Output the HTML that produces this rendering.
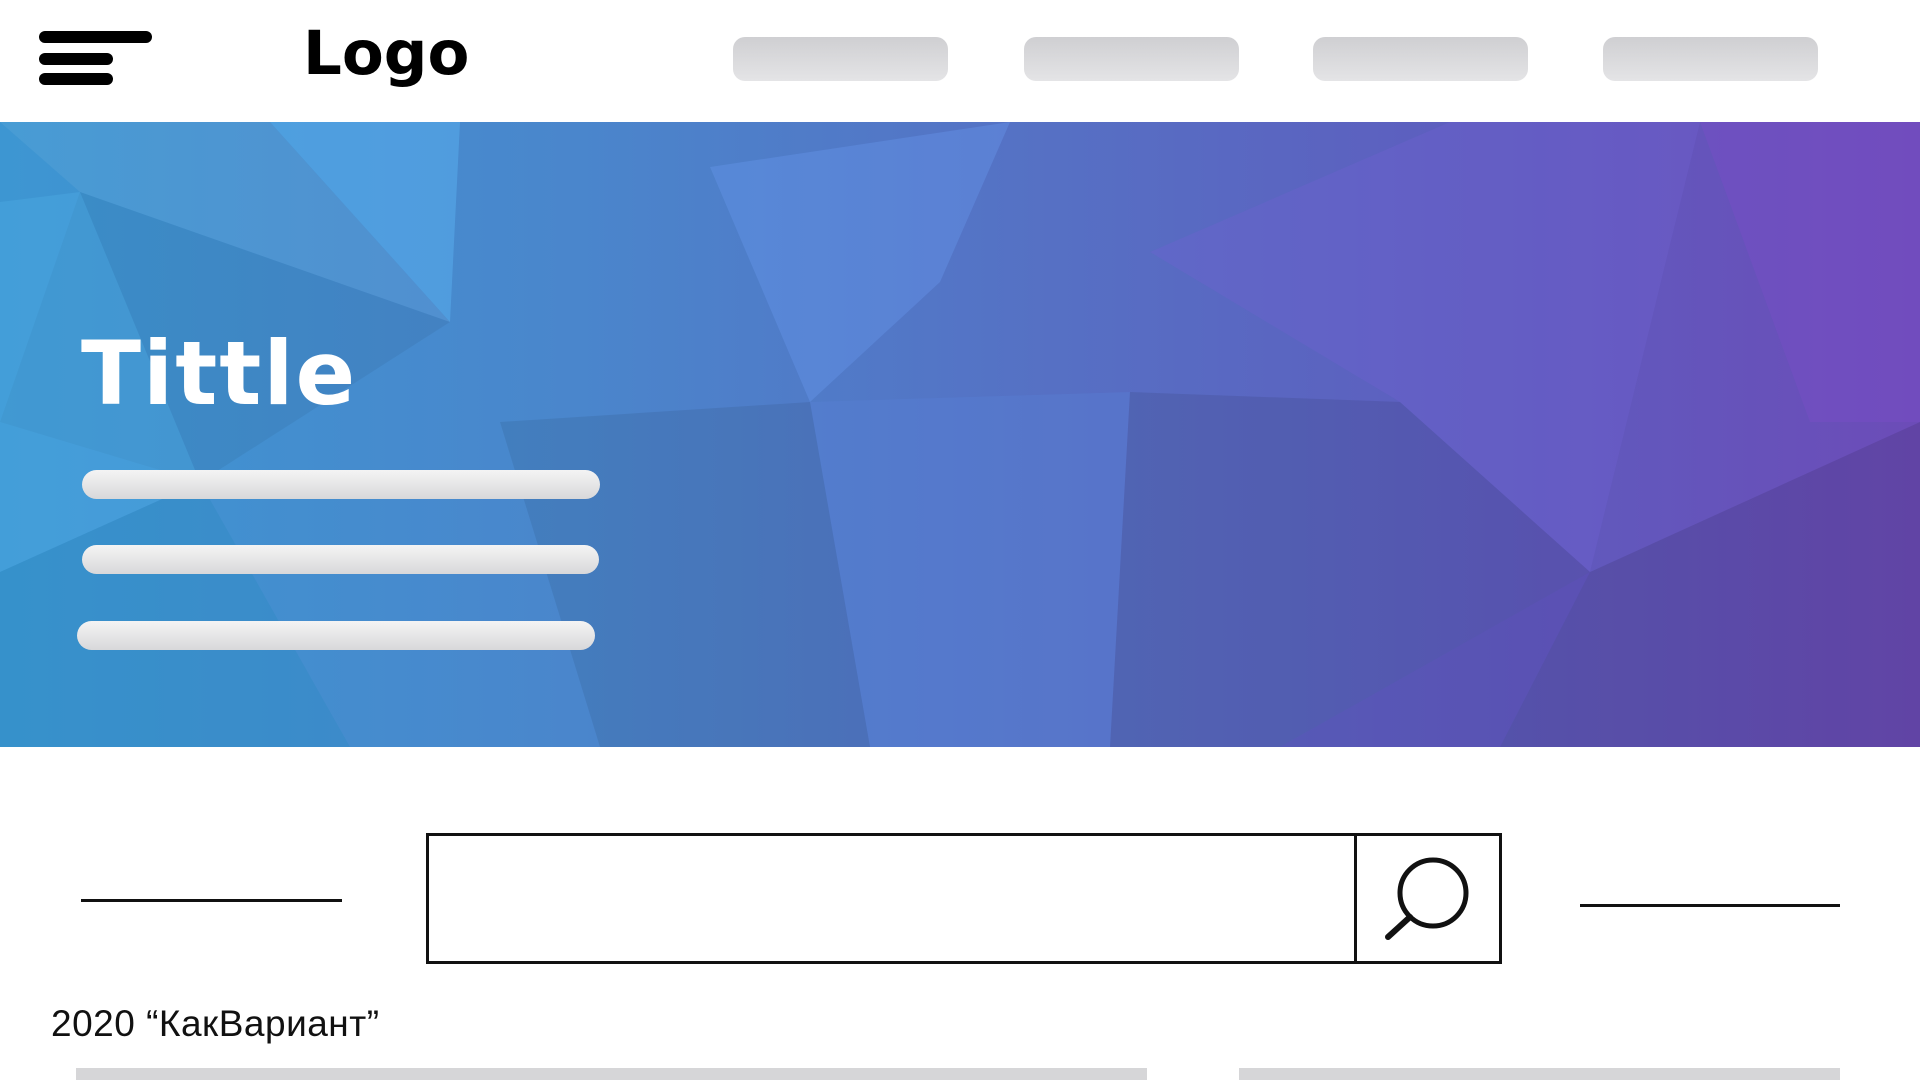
<!DOCTYPE html>
<html><head><meta charset="utf-8"><style>
html,body{margin:0;padding:0;width:1920px;height:1080px;overflow:hidden;background:#fff;position:relative;font-family:"Liberation Sans","DejaVu Sans",sans-serif}
.a{position:absolute}
.hb{background:#000;border-radius:7px;height:12px;left:39px}
.pill{top:37px;height:44px;width:215px;border-radius:12px;background:linear-gradient(#cfcfd2,#e4e4e6)}
.bar{left:82px;width:518px;height:29px;border-radius:15px;background:linear-gradient(#f4f4f4,#d8d8da)}
</style></head><body>
<div class="a hb" style="top:31px;width:113px"></div>
<div class="a hb" style="top:53px;width:74px"></div>
<div class="a hb" style="top:73px;width:74px"></div>
<div class="a" style="left:303px;top:18px;font-size:61px;font-weight:bold;font-family:'DejaVu Sans',sans-serif;letter-spacing:0px">Logo</div>
<div class="a pill" style="left:733px"></div>
<div class="a pill" style="left:1024px"></div>
<div class="a pill" style="left:1313px"></div>
<div class="a pill" style="left:1603px"></div>
<div class="a" style="left:0;top:122px;width:1920px;height:625px;background:linear-gradient(90deg,#3d96d2 0%,#4a86cc 30%,#5670c4 55%,#5e5cbe 78%,#6c4cb8 100%)">
<svg width="1920" height="625" style="position:absolute;left:0;top:0">
<polygon points="0,0 270,0 450,200 80,70" fill="#fff" opacity=".06"/>
<polygon points="270,0 460,0 450,200" fill="#5ab0f0" opacity=".5"/>
<polygon points="80,70 450,200 200,360 0,300" fill="#000" opacity=".05"/>
<polygon points="0,80 80,70 200,360 0,450" fill="#4fb0e8" opacity=".35"/>
<polygon points="710,45 1010,0 940,160 810,280" fill="#6a9af0" opacity=".35"/>
<polygon points="810,280 1130,270 1110,625 870,625" fill="#5a80d8" opacity=".35"/>
<polygon points="1130,270 1400,280 1590,450 1280,625 1110,625" fill="#000" opacity=".08"/>
<polygon points="1150,130 1450,0 1700,0 1590,450 1400,280" fill="#7060d0" opacity=".35"/>
<polygon points="1590,450 1920,300 1920,625 1500,625" fill="#000" opacity=".1"/>
<polygon points="1700,0 1920,0 1920,300 1810,300" fill="#7a4ec8" opacity=".4"/>
<polygon points="500,300 810,280 870,625 600,625" fill="#000" opacity=".07"/>
<polygon points="0,450 200,360 350,625 0,625" fill="#2a8ac0" opacity=".35"/>
<polygon points="1280,625 1500,625 1590,450" fill="#5040a0" opacity=".3"/>
</svg>
<div class="a" style="left:81px;top:200px;font-size:88px;font-weight:bold;color:#fff;font-family:'DejaVu Sans',sans-serif;letter-spacing:2px">Tittle</div>
</div>
<div class="a bar" style="top:470px"></div>
<div class="a bar" style="top:545px;width:517px"></div>
<div class="a bar" style="top:621px;left:77px"></div>
<div class="a" style="left:81px;top:899px;width:261px;height:3px;background:#111"></div>
<div class="a" style="left:1580px;top:904px;width:260px;height:3px;background:#111"></div>
<div class="a" style="left:426px;top:833px;width:1070px;height:125px;border:3px solid #111"></div>
<div class="a" style="left:1354px;top:833px;width:3px;height:131px;background:#111"></div>
<svg class="a" style="left:1370px;top:840px" width="130" height="120"><circle cx="63" cy="53" r="33" fill="none" stroke="#111" stroke-width="5"/><line x1="18" y1="97" x2="40" y2="77" stroke="#111" stroke-width="6" stroke-linecap="round"/></svg>
<div class="a" style="left:51px;top:1003px;font-size:37px;color:#111;letter-spacing:0.5px">2020 “КакВариант”</div>
<div class="a" style="left:76px;top:1068px;width:1071px;height:12px;background:#d6d6d8"></div>
<div class="a" style="left:1239px;top:1068px;width:601px;height:12px;background:#d6d6d8"></div>
</body></html>
